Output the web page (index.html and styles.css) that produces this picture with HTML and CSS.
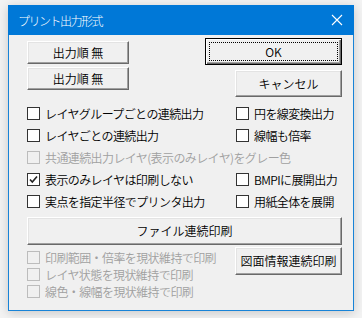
FILE: index.html
```html
<!DOCTYPE html>
<html lang="ja">
<head>
<meta charset="utf-8">
<link rel="stylesheet" href="styles.css">
</head>
<body>
<div class="window">
  <div class="titlebar">
    <span class="title">プリント出力形式</span>
    <svg class="close" width="12" height="12" viewBox="0 0 12 12"><path d="M1 1 L11 11 M11 1 L1 11" stroke="#fff" stroke-width="1.1" fill="none"/></svg>
  </div>
  <div class="content">
    <div class="top">
      <div class="leftbtns">
        <button class="btn order">出力順 無</button>
        <button class="btn order">出力順 無</button>
      </div>
      <div class="rightbtns">
        <button class="btn ok"><span class="focus">OK</span></button>
        <button class="btn cancel">キャンセル</button>
      </div>
    </div>
    <div class="grid">
      <label class="cb"><span class="box"></span>レイヤグループごとの連続出力</label>
      <label class="cb"><span class="box"></span>円を線変換出力</label>
      <label class="cb"><span class="box"></span>レイヤごとの連続出力</label>
      <label class="cb"><span class="box"></span>線幅も倍率</label>
      <label class="cb dis span"><span class="box"></span>共通連続出力レイヤ(表示のみレイヤ)をグレー色</label>
      <label class="cb"><span class="box"><svg width="11" height="11" viewBox="0 0 11 11"><path d="M2 5.5 L4.3 8 L9 2.5" stroke="#222" stroke-width="1.6" fill="none"/></svg></span>表示のみレイヤは印刷しない</label>
      <label class="cb"><span class="box"></span>BMPIに展開出力</label>
      <label class="cb"><span class="box"></span>実点を指定半径でプリンタ出力</label>
      <label class="cb"><span class="box"></span>用紙全体を展開</label>
    </div>
    <button class="btn file">ファイル連続印刷</button>
    <div class="bottom">
      <div class="blist">
        <label class="cb dis"><span class="box"></span>印刷範囲・倍率を現状維持で印刷</label>
        <label class="cb dis"><span class="box"></span>レイヤ状態を現状維持で印刷</label>
        <label class="cb dis"><span class="box"></span>線色・線幅を現状維持で印刷</label>
      </div>
      <button class="btn info">図面情報連続印刷</button>
    </div>
  </div>
</div>
</body>
</html>
```
FILE: styles.css
```css
* { box-sizing: border-box; }
html, body { margin: 0; padding: 0; }
body {
  width: 362px;
  height: 318px;
  background: #f3f3f3;
  font-family: "Noto Sans CJK JP", "Noto Sans", sans-serif;
  font-size: 12px;
  font-weight: 350;
  color: #000;
  overflow: hidden;
  padding: 5px 0 0 8px;
}
.window {
  width: 346px;
  height: 306px;
  border: 1px solid #1883d7;
  background: #f0f0f0;
  box-shadow: 0 2px 10px rgba(0,0,0,0.18);
  display: flex;
  flex-direction: column;
}
.titlebar {
  height: 30px;
  margin: -1px -1px 0 -1px;
  background: #0078d7;
  color: #fff;
  display: flex;
  align-items: center;
  justify-content: space-between;
  padding: 0 11px 0 10px;
}
.title { font-size: 12px; letter-spacing: -1.5px; font-weight: 300; }
.close { display: block; }
.content {
  padding: 3px 11px 0 18px;
  display: flex;
  flex-direction: column;
}
.btn {
  font-family: inherit;
  font-size: 12px;
  font-weight: 350;
  color: #000;
  background: #f0f0f0;
  border: 1px solid;
  border-color: #fff #696969 #696969 #fff;
  box-shadow: inset -1px -1px 0 #a0a0a0, inset 1px 1px 0 #e3e3e3;
  padding: 0;
  line-height: 1;
  display: flex;
  align-items: center;
  justify-content: center;
}
.top {
  display: flex;
  justify-content: space-between;
}
.leftbtns {
  display: flex;
  flex-direction: column;
  gap: 3px;
  padding-top: 3px;
}
.order { width: 102px; height: 23px; }
.rightbtns {
  display: flex;
  flex-direction: column;
  align-items: flex-end;
  gap: 5px;
}
.ok {
  width: 137px;
  height: 27px;
  border: 1px solid #000;
  box-shadow: inset 1px 1px 0 #fff, inset -1px -1px 0 #696969, inset -2px -2px 0 #a0a0a0;
  padding: 3px;
}
.focus {
  width: 100%;
  height: 100%;
  border: 1px dotted #000;
  display: flex;
  align-items: center;
  justify-content: center;
}
.cancel { width: 107px; height: 27px; }
.grid {
  display: grid;
  grid-template-columns: 209px 1fr;
  row-gap: 6px;
  margin-top: 8px;
}
.span { grid-column: 1 / 3; }
.cb {
  display: flex;
  align-items: center;
  height: 16px;
  white-space: nowrap;
  letter-spacing: -0.6px;
}
.box {
  width: 13px;
  height: 13px;
  border: 1px solid #333;
  background: #fff;
  margin-right: 5px;
  display: flex;
  align-items: center;
  justify-content: center;
  flex: none;
}
.cb.dis { color: #a0a0a0; }
.cb.dis .box { border-color: #bcbcbc; background: #f0f0f0; }
.file {
  width: 315px;
  height: 28px;
  margin-top: 8px;
}
.bottom {
  display: flex;
  justify-content: space-between;
  margin-top: 2px;
}
.blist {
  display: flex;
  flex-direction: column;
  gap: 1px;
  padding-top: 2px;
}
.info { width: 107px; height: 28px; margin-right: 0; }
```
